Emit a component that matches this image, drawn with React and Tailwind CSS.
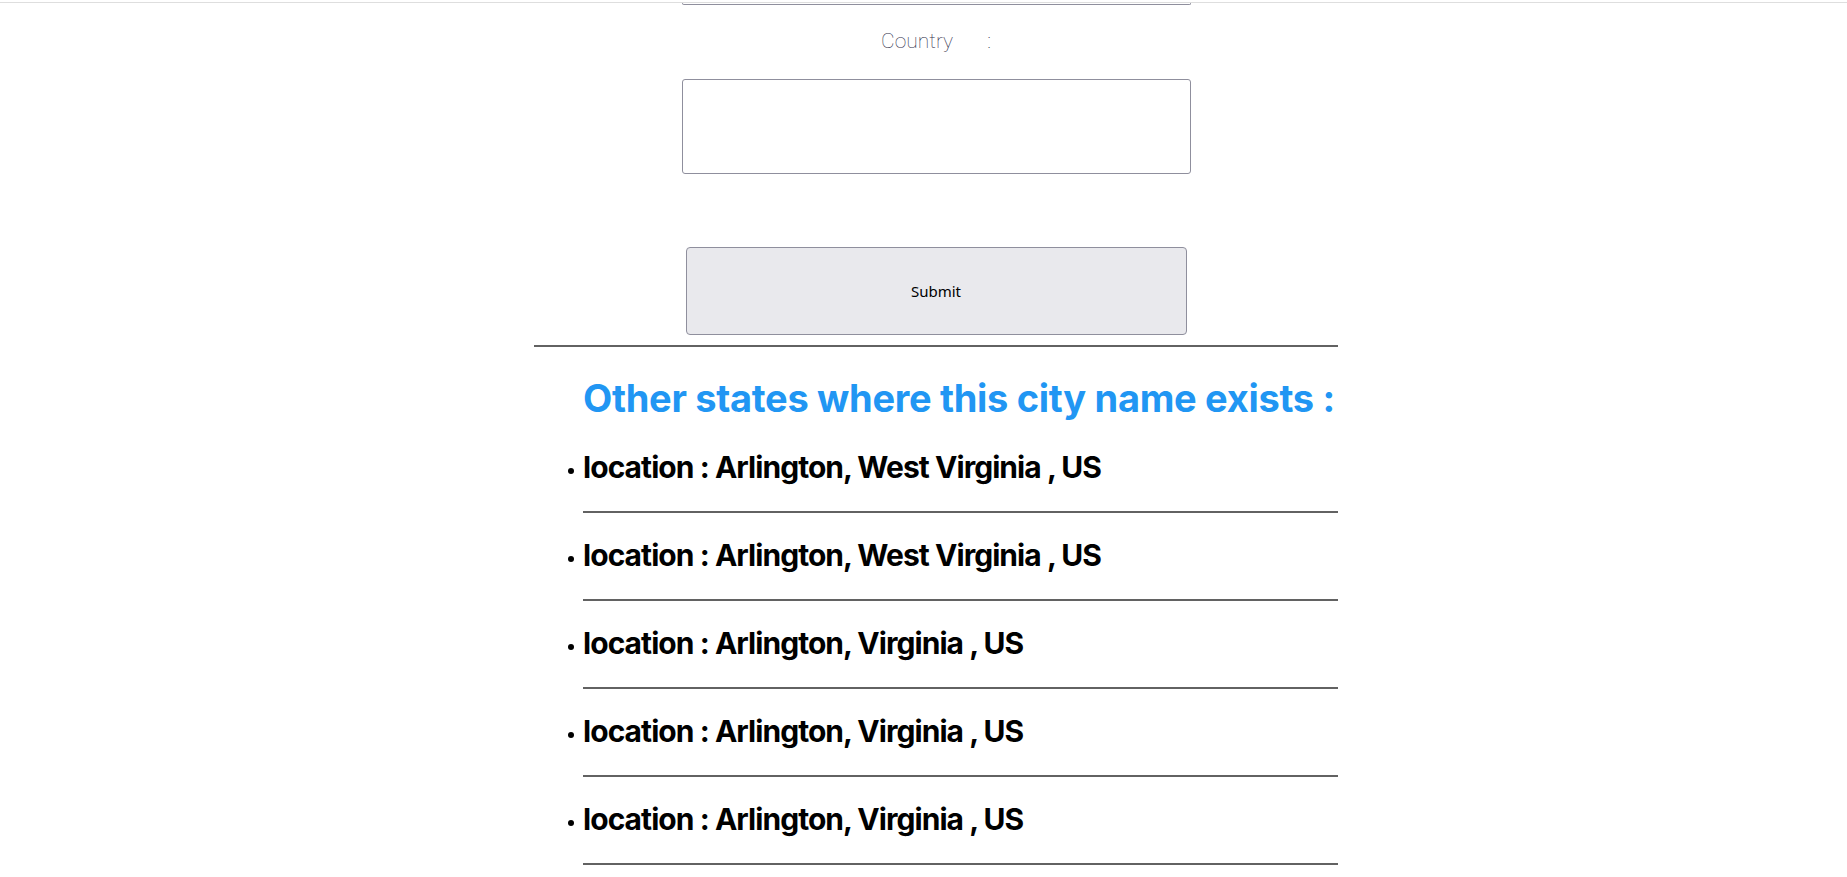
import React from 'react';

const locations = [
  'Arlington, West Virginia , US',
  'Arlington, West Virginia , US',
  'Arlington, Virginia , US',
  'Arlington, Virginia , US',
  'Arlington, Virginia , US',
];

const App = () => {
  return (
    <div className="min-h-screen bg-white">
      <div className="h-[3px] border-b border-[#dedede]" />

      <div className="ml-[534px] w-[804px]">
        {/* bottom edge of the field above, scrolled out of view */}
        <div className="mx-auto w-[509px] h-[2px] border-x border-b border-[#8f8f9d] rounded-b-[3px]" />

        <div
          className="mt-[24px] flex justify-center gap-[34px] text-[21px] leading-[25px] font-thin text-[#2e2e4a]"
          style={{ fontFamily: 'Roboto, "Liberation Sans", sans-serif' }}
        >
          <span>Country</span>
          <span>:</span>
        </div>

        <input
          type="text"
          className="block mx-auto mt-[25px] w-[509px] h-[95px] border border-[#8f8f9d] rounded-[3px] bg-white outline-none"
        />

        <button
          className="block mx-auto mt-[73px] w-[501px] h-[88px] border border-[#8f8f9d] rounded-[4px] bg-[#e9e9ed] text-[15px] text-black"
          style={{ fontFamily: '"Noto Sans", "Open Sans", sans-serif' }}
        >
          Submit
        </button>

        <div className="mt-[10px] border-t-2 border-[#626262]" />

        <div style={{ fontFamily: 'Inter, "Liberation Sans", sans-serif' }}>
          <h2 className="mt-[28px] pl-[49px] text-[38px] leading-[46px] font-bold text-[#2196f3] tracking-[-0.3px] whitespace-nowrap">
            Other states where this city name exists :
          </h2>

          <ul className="mt-[28px] pl-[49px]">
            {locations.map((loc, i) => (
              <li key={i}>
                <div className="flex items-start">
                  <span className="-ml-[15px] mr-[9px] mt-[19px] w-[6px] h-[6px] rounded-full bg-black shrink-0" />
                  <span className="text-[30px] leading-[36px] font-bold text-black tracking-[-0.95px] whitespace-nowrap">
                    location : {loc}
                  </span>
                </div>
                <div className="mt-[26px] mb-[24px] border-t-2 border-[#626262]" />
              </li>
            ))}
          </ul>
        </div>
      </div>
    </div>
  );
};

export default App;
